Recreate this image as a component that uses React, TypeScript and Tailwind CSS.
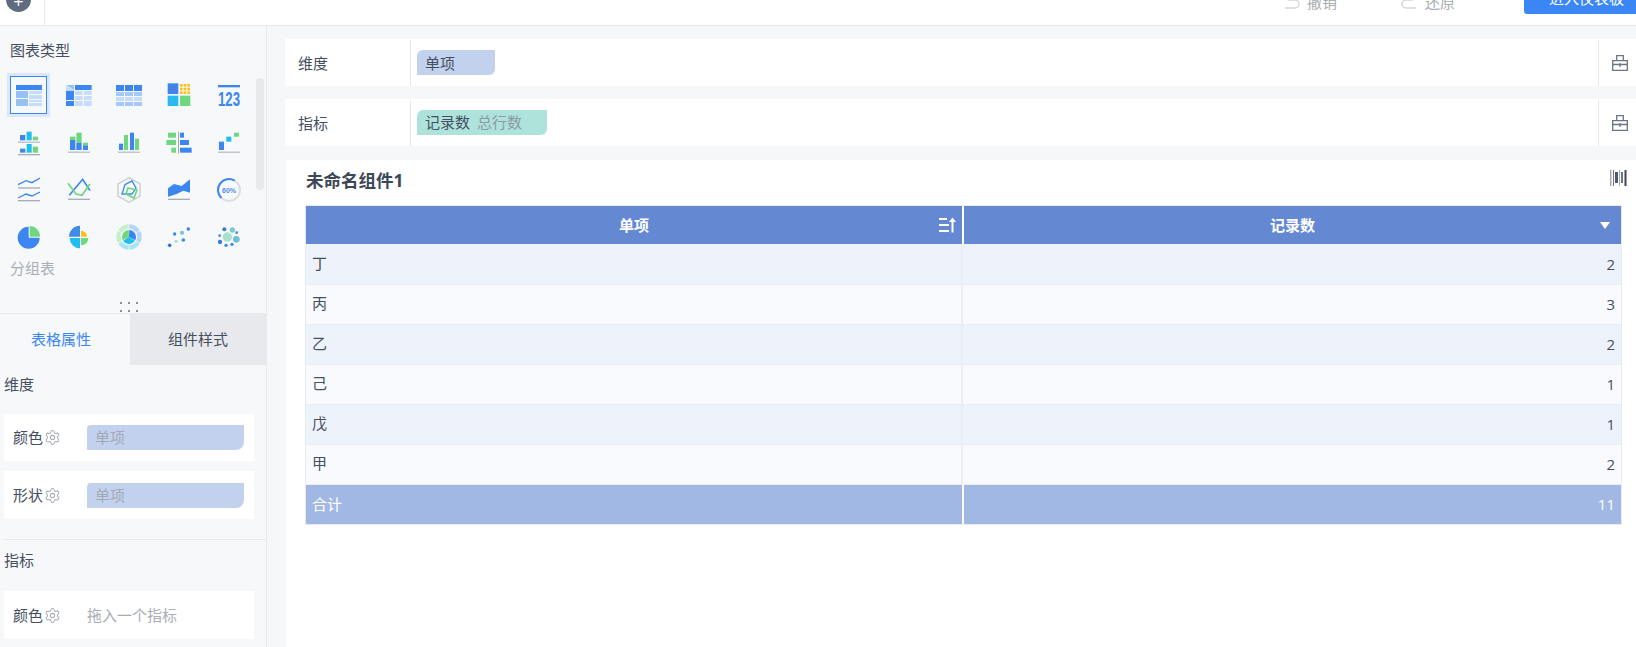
import React from "react";
import { Settings } from "lucide-react";

const B = "#3b86f0", LB = "#96c1f7", VL = "#c5dcfb", G = "#6fd77d", C = "#1fbdf0", Y = "#fdc01a", A = "#a5adba";

function R({ x, y, x2, y2, f }: { x: number; y: number; x2: number; y2: number; f: string }) {
  return <rect x={x} y={y} width={x2 - x} height={y2 - y} fill={f} />;
}

// Icons are plotted in 1/3-pixel units
function Ic({ vx, vy, children }: { vx: number; vy: number; children: React.ReactNode }) {
  return (
    <svg width="30" height="30" viewBox={`${vx} ${vy} 90 90`}>
      {children}
    </svg>
  );
}

const wedge = (cx: number, cy: number, r: number, a0: number, a1: number) => {
  const p = (a: number) => [cx + r * Math.cos((a * Math.PI) / 180), cy + r * Math.sin((a * Math.PI) / 180)];
  const [x0, y0] = p(a0);
  const [x1, y1] = p(a1);
  return `M${cx} ${cy}L${x0} ${y0}A${r} ${r} 0 ${a1 - a0 > 180 ? 1 : 0} 1 ${x1} ${y1}Z`;
};

const icons: React.ReactNode[] = [
  <Ic vx={42} vy={240} key="1">
    <R x={48} y={255} x2={126} y2={270} f={B} />
    <R x={48} y={273} x2={84} y2={294} f={LB} />
    <R x={48} y={297} x2={84} y2={318} f={LB} />
    <R x={87} y={273} x2={126} y2={282} f={VL} />
    <R x={87} y={285} x2={126} y2={297} f={VL} />
    <R x={87} y={300} x2={126} y2={306} f={VL} />
    <R x={87} y={309} x2={126} y2={318} f={VL} />
  </Ic>,
  <Ic vx={192} vy={240} key="2">
    <path d="M198 255h24v15z" fill={LB} />
    <path d="M198 257l22 13h-22z" fill={VL} />
    <R x={225} y={255} x2={275} y2={270} f={B} />
    <R x={198} y={272} x2={222} y2={300} f={B} />
    <R x={198} y={303} x2={222} y2={318} f={B} />
    <R x={225} y={273} x2={248} y2={285} f={VL} />
    <R x={252} y={273} x2={275} y2={285} f={VL} />
    <R x={225} y={288} x2={248} y2={300} f={VL} />
    <R x={252} y={288} x2={275} y2={300} f={VL} />
    <R x={225} y={303} x2={248} y2={318} f={VL} />
    <R x={252} y={303} x2={275} y2={318} f={VL} />
  </Ic>,
  <Ic vx={342} vy={240} key="3">
    <R x={348} y={255} x2={372} y2={273} f={B} />
    <R x={375} y={255} x2={399} y2={273} f={B} />
    <R x={402} y={255} x2={426} y2={273} f={B} />
    {[276, 291, 306].map((y, i) =>
      [348, 375, 402].map((x) => (
        <R key={`${x}-${y}`} x={x} y={y} x2={x + 24} y2={y + 12} f={i === 1 ? VL : "#a4c8f8"} />
      ))
    )}
  </Ic>,
  <Ic vx={492} vy={240} key="4">
    <R x={503} y={250} x2={535} y2={282} f={B} />
    <R x={510} y={258} x2={527} y2={274} f="#4f7fd8" />
    {[252, 263, 274].map((y) =>
      [540, 551, 562].map((x) => <R key={`${x}-${y}`} x={x} y={y} x2={x + 8} y2={y + 8} f={Y} />)
    )}
    <R x={503} y={287} x2={535} y2={318} f={C} />
    <R x={510} y={295} x2={527} y2={311} f="#3ab3ee" />
    <R x={540} y={287} x2={571} y2={318} f={G} />
  </Ic>,
  <Ic vx={642} vy={240} key="5">
    <R x={654} y={255} x2={720} y2={262} f={B} />
    <text x={654} y={317} fontSize="62" fontWeight="700" fill={B} textLength="66" lengthAdjust="spacingAndGlyphs" fontFamily="'Liberation Sans', sans-serif">
      123
    </text>
  </Ic>,

  <Ic vx={42} vy={382} key="6">
    <R x={60} y={406} x2={76} y2={422} f={B} />
    <R x={80} y={396} x2={95} y2={422} f={C} />
    <R x={99} y={411} x2={114} y2={422} f={G} />
    <R x={54} y={426} x2={120} y2={429} f={A} />
    <R x={60} y={447} x2={76} y2={459} f={B} />
    <R x={80} y={433} x2={95} y2={459} f={C} />
    <R x={99} y={441} x2={114} y2={459} f={G} />
    <R x={54} y={463} x2={120} y2={467} f={A} />
  </Ic>,
  <Ic vx={192} vy={382} key="7">
    <R x={210} y={411} x2={226} y2={421} f={G} />
    <R x={210} y={421} x2={226} y2={451} f={B} />
    <R x={229} y={399} x2={245} y2={429} f={G} />
    <R x={229} y={429} x2={245} y2={451} f={B} />
    <R x={249} y={429} x2={264} y2={437} f={G} />
    <R x={249} y={437} x2={264} y2={451} f={B} />
    <R x={204} y={456} x2={270} y2={459} f={A} />
  </Ic>,
  <Ic vx={342} vy={382} key="8">
    <R x={357} y={432} x2={369} y2={451} f={B} />
    <R x={372} y={406} x2={384} y2={451} f={G} />
    <R x={390} y={399} x2={402} y2={451} f={B} />
    <R x={405} y={417} x2={417} y2={451} f={G} />
    <R x={354} y={456} x2={420} y2={459} f={A} />
  </Ic>,
  <Ic vx={492} vy={382} key="9">
    <R x={534} y={396} x2={537} y2={462} f={A} />
    <R x={504} y={399} x2={528} y2={414} f={G} />
    <R x={499} y={421} x2={528} y2={436} f={G} />
    <R x={514} y={444} x2={528} y2={459} f={G} />
    <R x={540} y={399} x2={552} y2={414} f={B} />
    <R x={540} y={421} x2={567} y2={436} f={B} />
    <R x={540} y={444} x2={575} y2={459} f={B} />
  </Ic>,
  <Ic vx={642} vy={382} key="10">
    <R x={657} y={426} x2={672} y2={451} f={B} />
    <R x={679} y={411} x2={694} y2={426} f={C} />
    <R x={702} y={399} x2={717} y2={411} f={G} />
    <R x={654} y={456} x2={720} y2={459} f={A} />
  </Ic>,

  <Ic vx={42} vy={15} key="11">
    <polyline points="54,44 78,32 96,38 120,24" fill="none" stroke={B} strokeWidth="4" />
    <R x={54} y={52} x2={120} y2={56} f={A} />
    <polyline points="54,84 78,72 96,78 120,66" fill="none" stroke={B} strokeWidth="4" />
    <R x={54} y={90} x2={120} y2={94} f={A} />
  </Ic>,
  <Ic vx={192} vy={15} key="12">
    <polyline points="208,76 228,52 248,28 270,62" fill="none" stroke={B} strokeWidth="5" />
    <polyline points="204,40 228,72 246,76 270,42" fill="none" stroke={G} strokeWidth="5" />
    <R x={204} y={86} x2={270} y2={90} f={A} />
  </Ic>,
  <Ic vx={342} vy={15} key="13">
    <polygon points="387,23 420,42 420,78 387,97 354,78 354,42" fill="none" stroke="#c7ccd4" strokeWidth="4" />
    <polygon points="375,44 396,33 408,54 396,72 366,72" fill="none" stroke={B} strokeWidth="4" />
    <polygon points="384,54 411,60 402,84 378,72" fill="none" stroke={G} strokeWidth="5" />
  </Ic>,
  <Ic vx={492} vy={15} key="14">
    <polygon points="504,55 522,42 545,48 570,28 570,68 550,62 530,72 504,80" fill={B} />
    <R x={504} y={86} x2={570} y2={90} f={A} />
  </Ic>,
  <Ic vx={642} vy={15} key="15">
    <circle cx="687" cy="60" r="33" fill="none" stroke="#dcdfe4" strokeWidth="6" />
    <path d="M664 84A33 33 0 0 1 704 32" fill="none" stroke={B} strokeWidth="6" />
    <text x="687" y="68" textAnchor="middle" fontSize="21" fontWeight="700" fill="#4f8fe8" fontFamily="'Liberation Sans', sans-serif">
      60%
    </text>
  </Ic>,

  <Ic vx={42} vy={158} key="16">
    <path d={wedge(86, 205, 33, 0, 270)} fill={B} />
    <path d="M89 170A31 31 0 0 1 120 202H89Z" fill={G} />
  </Ic>,
  <Ic vx={192} vy={158} key="17">
    <path d={wedge(240, 202, 33, 180, 270)} fill="#3f8ce8" />
    <path d={wedge(243, 202, 18, 270, 360)} fill={Y} />
    <path d={wedge(240, 206, 31, 90, 180)} fill={C} />
    <path d={wedge(243, 206, 22, 0, 90)} fill={G} />
  </Ic>,
  <Ic vx={342} vy={158} key="18">
    {[
      [-88, -32, "#b5d4fa"],
      [-28, 28, "#b5d4fa"],
      [32, 88, "#a8e4f8"],
      [92, 148, "#a8e4f8"],
      [152, 208, "#c4efc9"],
      [212, 268, "#c4efc9"],
    ].map(([a, b, f]) => (
      <path key={String(a)} d={wedge(387, 203, 38, a as number, b as number)} fill={f as string} />
    ))}
    <circle cx="387" cy="203" r="25" fill="#f8f9fc" />
    <path d={wedge(387, 203, 21, -88, 28)} fill={B} />
    <path d={wedge(387, 203, 21, 32, 148)} fill={C} />
    <path d={wedge(387, 203, 21, 152, 268)} fill={G} />
  </Ic>,
  <Ic vx={492} vy={158} key="19">
    <circle cx="509" cy="228" r="5.5" fill="#3b6ec9" />
    <circle cx="524" cy="194" r="5" fill={B} />
    <circle cx="546" cy="190" r="6" fill="#6cc4d4" />
    <circle cx="565" cy="179" r="5.5" fill={B} />
    <circle cx="528" cy="216" r="5" fill="#a8e0cc" />
    <circle cx="550" cy="212" r="5.5" fill={B} />
  </Ic>,
  <Ic vx={642} vy={158} key="20">
    <circle cx="682" cy="203" r="14" fill="#a8e0cc" />
    <circle cx="673" cy="180" r="6" fill="#3b7ad9" />
    <circle cx="697" cy="182" r="8" fill="#7cc8d4" />
    <circle cx="709" cy="210" r="10" fill="#6bc0d4" />
    <circle cx="710" cy="190" r="4" fill={B} />
    <circle cx="659" cy="199" r="4" fill={B} />
    <circle cx="660" cy="218" r="6.5" fill="#3b7ad9" />
    <circle cx="678" cy="228" r="5" fill={B} />
    <circle cx="696" cy="225" r="5" fill={B} />
  </Ic>,
];

function Toolbox() {
  return (
    <svg width="16" height="16" viewBox="0 0 16 16" fill="none" stroke="#6b7483" strokeWidth="1.3">
      <path d="M.7 5.7h14.6v9.6H.7z" />
      <path d="M4.7 5.7V.7h6.6v5" />
      <path d="M.7 9.5h14.6M8 8v4" />
    </svg>
  );
}

function Barcode() {
  return (
    <svg width="18" height="18" viewBox="0 0 18 18">
      <rect x="0" y="1" width="1.5" height="16" fill="#a9a9b0" />
      <rect x="3" y="1" width="1" height="16" fill="#8a6b70" />
      <rect x="5" y="3" width="3" height="11" fill="#4b5a78" />
      <rect x="9" y="1" width="1" height="16" fill="#a9a9b0" />
      <rect x="11" y="3" width="2" height="11" fill="#6b7483" />
      <rect x="14.5" y="1" width="2" height="16" fill="#3d4757" />
    </svg>
  );
}

function SortIcon() {
  return (
    <svg width="18" height="16" viewBox="0 0 18 16" fill="white">
      <rect x="0" y="1" width="8" height="2" />
      <rect x="0" y="7" width="10" height="2" />
      <rect x="0" y="13" width="10" height="2" />
      <rect x="12.5" y="4" width="2" height="11.5" />
      <path d="M13.5 0.5L17 5h-7z" />
    </svg>
  );
}

function PropCard({ label, h, children }: { label: string; h: string; children: React.ReactNode }) {
  return (
    <div className={`flex items-center bg-white w-[250px] ${h}`}>
      <span className="ml-[9px] text-[#454f5f]">{label}</span>
      <Settings size={17} strokeWidth={1.5} className="ml-[1px] text-[#a9adb5]" />
      <div className="ml-[26px] flex-1 pr-[10px]">{children}</div>
    </div>
  );
}

const rows: [string, number][] = [
  ["丁", 2],
  ["丙", 3],
  ["乙", 2],
  ["己", 1],
  ["戊", 1],
  ["甲", 2],
];

export default function App() {
  return (
    <div className="w-[1636px] h-[647px] overflow-hidden flex flex-col bg-white text-[15px] text-[#454f5f] font-['Open_Sans','Noto_Sans_CJK_SC',sans-serif]">
      <header className="h-[26px] shrink-0 flex border-b border-[#e6e8eb] bg-white overflow-hidden">
        <div className="w-[45px] border-r border-[#e6e8eb] pl-[6px]">
          <div className="w-[25px] h-[25px] -mt-[13px] rounded-full bg-[#5f6b7e] flex items-end justify-center">
            <div className="text-white text-[18px] leading-[22px]">+</div>
          </div>
        </div>
        <div className="flex-1" />
        <div className="flex items-start text-[#a9adb5]">
          <div className="flex items-center -mt-[10px] h-[24px] gap-[7px] w-[117px]">
            <svg width="16" height="16" viewBox="0 0 16 16" fill="none" stroke="#d5d8dd" strokeWidth="1.5" className="-mt-[2px]">
              <path d="M1 15h10a4 4 0 0 0 0-8H4" />
            </svg>
            <span>撤销</span>
          </div>
          <div className="flex items-center -mt-[10px] h-[24px] gap-[8px] w-[123px]">
            <svg width="16" height="16" viewBox="0 0 16 16" fill="none" stroke="#d5d8dd" strokeWidth="1.5" className="-mt-[2px]">
              <path d="M15 15H5a4 4 0 0 1 0-8h7" />
            </svg>
            <span>还原</span>
          </div>
          <div className="w-[112px] h-[32px] -mt-[18px] bg-[#3a86f5] rounded-bl-[3px] text-white flex items-center pl-[25px]">进入仪表板</div>
        </div>
      </header>

      <div className="flex-1 min-h-0 flex">
        <aside className="w-[267px] shrink-0 bg-[#f7f8fa] border-r border-[#e8e9ec] flex flex-col">
          <div className="relative h-[288px] shrink-0 border-b border-[#e8e9ec] pt-[13px]">
            <div className="pl-[10px] leading-[22px]">图表类型</div>
            <div className="mt-[10px] ml-[4px] grid grid-cols-[repeat(5,50px)] auto-rows-[47.5px]">
              {icons.map((ic, i) => (
                <div key={i} className="flex items-center justify-center relative">
                  {i === 0 && <div className="absolute left-[6px] top-[5px] w-[37px] h-[38px] border border-[#3b86f0] outline-[3px] outline-[#dbe8fb]" />}
                  <div className="relative h-[30px]">{ic}</div>
                </div>
              ))}
            </div>
            <div className="pl-[10px] -mt-[4px] leading-[22px] text-[#a9adb5]">分组表</div>
            <div className="absolute right-[2px] top-[52px] w-[8px] h-[112px] rounded-full bg-[#e8e9ec]" />
            <div className="absolute left-[120px] top-[276px] grid grid-cols-3 gap-x-[6px] gap-y-[6px]">
              {[0, 1, 2, 3, 4, 5].map((i) => (
                <div key={i} className="w-[2px] h-[2px] rounded-full bg-[#5f6b7e]" />
              ))}
            </div>
          </div>
          <div className="flex h-[51px] shrink-0">
            <div className="w-[130px] pr-[8px] flex items-center justify-center text-[#3a86f5]">表格属性</div>
            <div className="flex-1 flex items-center justify-center bg-[#e8e9ec]">组件样式</div>
          </div>
          <div className="pl-[4px] pt-[8px] leading-[22px]">维度</div>
          <div className="pl-[4px] mt-[19px] flex flex-col gap-[10px]">
            <PropCard label="颜色" h="h-[47px]">
              <div className="h-[25px] bg-[#c2d1ee] rounded-tl-[4px] rounded-br-[8px] pl-[8px] leading-[25px] text-[#a3a9b5]">单项</div>
            </PropCard>
            <PropCard label="形状" h="h-[48px]">
              <div className="h-[25px] bg-[#c2d1ee] rounded-tl-[4px] rounded-br-[8px] pl-[8px] leading-[25px] text-[#a3a9b5]">单项</div>
            </PropCard>
          </div>
          <div className="ml-[4px] mt-[20px] border-t border-[#e8e9ec] pt-[9px] leading-[22px]">指标</div>
          <div className="pl-[4px] mt-[20px]">
            <PropCard label="颜色" h="h-[48px]">
              <span className="text-[#a9adb5]">拖入一个指标</span>
            </PropCard>
          </div>
        </aside>

        <main className="flex-1 min-w-0 bg-[#f6f7f9] pt-[13px] pl-[18px] flex flex-col">
          {[
            { label: "维度", pill: <div className="w-[78px] h-[25px] bg-[#c2d1ee] rounded-tl-[6px] rounded-br-[6px] pl-[8px] leading-[26px]">单项</div> },
            {
              label: "指标",
              pill: (
                <div className="w-[130px] h-[25px] bg-[#aee3dc] rounded-tl-[6px] rounded-br-[6px] pl-[8px] leading-[25px]">
                  记录数<span className="ml-[7px] text-[#8c9aa3]">总行数</span>
                </div>
              ),
            },
          ].map((r, i) => (
            <div key={r.label} className={`h-[47px] shrink-0 bg-white flex items-center ${i === 0 ? "mb-[13px]" : "mb-[14px]"}`}>
              <div className="w-[126px] h-[46px] border-r border-[#e6e8eb] pl-[13px] pt-[2px] flex items-center">{r.label}</div>
              <div className="flex-1 pl-[6px]">{r.pill}</div>
              <div className="w-[38px] h-[46px] border-l border-[#e6e8eb] flex items-center pl-[13px]">
                <Toolbox />
              </div>
            </div>
          ))}
          <section className="flex-1 min-h-0 ml-[1px] bg-white pl-[19px] pr-[14px]">
            <div className="h-[45px] relative flex items-center pb-[4px] pl-[1px] text-[17.5px] font-bold text-[#3d4757]">
              未命名组件1
              <div className="absolute right-[-6px] top-[9px]">
                <Barcode />
              </div>
            </div>
            <div className="border border-[#e6ebf6]">
              <div className="h-[38px] flex bg-[#6488d2] text-white font-bold text-[15px]">
                <div className="w-[656px] relative flex items-center justify-center">
                  单项
                  <div className="absolute right-[5px] top-[11px]">
                    <SortIcon />
                  </div>
                </div>
                <div className="w-[2px] bg-white" />
                <div className="flex-1 relative flex items-center justify-center">
                  记录数
                  <div className="absolute right-[11px] top-[16px] w-0 h-0 border-x-[5px] border-x-transparent border-t-[7px] border-t-white" />
                </div>
              </div>
              {rows.map(([n, v], i) => (
                <div
                  key={n}
                  className={`${i === 0 ? "h-[40px]" : "h-[40px] border-t border-[#e8edf6]"} flex items-center ${i % 2 === 0 ? "bg-[#eef3fb]" : "bg-[#f8fafe]"}`}
                >
                  <div className="w-[657px] h-full flex items-center pl-[6px] pb-[2px] border-r-2 border-[#e8edf6]">{n}</div>
                  <div className="flex-1 text-right pr-[6px]">{v}</div>
                </div>
              ))}
              <div className="h-[40px] flex bg-[#a2b8e4] text-white border-t border-[#e8edf6]">
                <div className="w-[656px] flex items-center pl-[6px]">合计</div>
                <div className="w-[2px] bg-white" />
                <div className="flex-1 flex items-center justify-end pr-[6px]">11</div>
              </div>
            </div>
          </section>
        </main>
      </div>
    </div>
  );
}
